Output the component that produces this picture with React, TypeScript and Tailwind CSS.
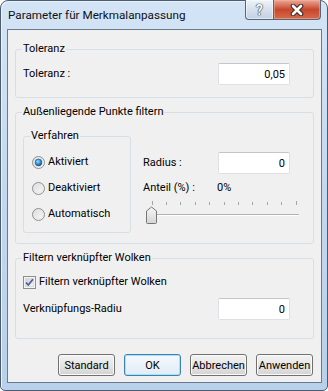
import React from 'react';

function Group({ label, className = '', children }: { label: string; className?: string; children: React.ReactNode }) {
  return (
    <fieldset className={`border border-[#d5dfe5] rounded-[3px] ${className}`}>
      <legend className="ml-[6px] px-[1px] leading-[16px]">{label}</legend>
      {children}
    </fieldset>
  );
}

function Field({ value, className = '' }: { value: string; className?: string }) {
  return (
    <div
      className={`w-[72px] h-[22px] bg-white border border-[#dde1e6] border-t-[#c3c7cc] rounded-[2px] flex items-center justify-end pr-[4px] leading-none ${className}`}
    >
      {value}
    </div>
  );
}

function Radio({ label, checked = false }: { label: string; checked?: boolean }) {
  return (
    <div className="flex items-center h-[16px]">
      <svg width="13" height="13" viewBox="0 0 13 13">
        <defs>
          <linearGradient id="rf" x1="0" y1="0" x2="1" y2="1">
            <stop offset="0" stopColor="#d9d9d9" />
            <stop offset="1" stopColor="#fbfbfb" />
          </linearGradient>
          <radialGradient id="rd" cx="0.4" cy="0.35" r="0.7">
            <stop offset="0" stopColor="#9adcff" />
            <stop offset="0.55" stopColor="#2b8fd6" />
            <stop offset="1" stopColor="#1a4f8c" />
          </radialGradient>
        </defs>
        <circle cx="6.5" cy="6.5" r="6" fill="url(#rf)" stroke="#8c8f93" strokeWidth="1" />
        <circle cx="6.5" cy="6.5" r="4.5" fill="none" stroke="#e8e8e8" strokeWidth="1" />
        {checked && <circle cx="6.5" cy="6.5" r="3.4" fill="url(#rd)" stroke="#1d4f86" strokeWidth="0.6" />}
      </svg>
      <span className="ml-[3px] leading-[16px]">{label}</span>
    </div>
  );
}

function Button({ label, primary = false }: { label: string; primary?: boolean }) {
  return (
    <div
      className={`w-[57px] h-[22px] rounded-[3px] border flex items-center justify-center leading-none ${
        primary
          ? 'border-[#3c7fb1] bg-gradient-to-b from-[#f4f9fc] to-[#e0ecf6] shadow-[inset_0_0_0_1px_#a9e3f7]'
          : 'border-[#707070] bg-gradient-to-b from-[#f2f2f2] via-[#e6e6e6] to-[#d3d3d3] shadow-[inset_0_0_0_1px_#fbfbfb]'
      }`}
    >
      {label}
    </div>
  );
}

function Slider() {
  const ticks = Array.from({ length: 11 }, (_, i) => 8.5 + i * 14.4);
  return (
    <svg width="157" height="26" viewBox="0 0 157 26" className="block">
      <defs>
        <linearGradient id="th" x1="0" y1="0" x2="0" y2="1">
          <stop offset="0" stopColor="#f7f7f7" />
          <stop offset="1" stopColor="#d5d5d5" />
        </linearGradient>
      </defs>
      {ticks.map((x, i) => (
        <line
          key={i}
          x1={Math.round(x) + 0.5}
          x2={Math.round(x) + 0.5}
          y1={i === 0 || i === ticks.length - 1 ? 1 : 2}
          y2={5}
          stroke="#a6a6a6"
          strokeWidth="1"
        />
      ))}
      <line x1="9" x2="156" y1="14.5" y2="14.5" stroke="#b4b4b4" strokeWidth="1" />
      <line x1="9" x2="156" y1="15.5" y2="15.5" stroke="#ffffff" strokeWidth="1" />
      <path
        d="M3.5 11 L8.5 7 L13.5 11 L13.5 22.5 Q13.5 23.5 12.5 23.5 L4.5 23.5 Q3.5 23.5 3.5 22.5 Z"
        fill="url(#th)"
        stroke="#767676"
        strokeWidth="1"
      />
    </svg>
  );
}

export default function App() {
  return (
    <div className="w-[328px] h-[391px] flex flex-col rounded-t-[8px] rounded-b-[5px] border border-[#4d5d70] bg-gradient-to-b from-[#d3e4f6] via-[#c3d8ee] to-[#b9d0ea] shadow-[inset_1px_1px_0_#e9f2fb] font-['Roboto',sans-serif] text-[11px] text-black">
      {/* Title bar */}
      <div className="h-[28px] flex items-start justify-between pl-[7px] pr-[6px]">
        <span className="mt-[6px] leading-[16px] text-[11.7px] text-[#101010]">Parameter für Merkmalanpassung</span>
        <div className="flex -mt-[1px]">
          <div className="w-[29px] h-[20px] rounded-bl-[4px] border border-t-0 border-[#56667a] bg-gradient-to-b from-[#eef3f9] via-[#d6e1ed] to-[#c2d1e2] shadow-[inset_0_0_0_1px_#ffffff80] flex items-center justify-center">
            <span className="text-[14px] font-bold leading-none text-[#f4f6f9] [text-shadow:0_0_1px_#2e3b4b,0_0_1px_#2e3b4b,0_0_1px_#2e3b4b]">
              ?
            </span>
          </div>
          <div className="w-[47px] h-[20px] rounded-br-[4px] border border-t-0 border-l-0 border-[#56667a] bg-gradient-to-b from-[#e9a796] via-[#c7462c] to-[#d86a49] shadow-[inset_0_0_0_1px_#f1b9a880] flex items-center justify-center">
            <svg width="16" height="12" viewBox="0 0 16 12">
              <path d="M4 2 L12 10 M12 2 L4 10" stroke="#3b2a28" strokeWidth="4.6" strokeLinecap="round" />
              <path d="M4 2 L12 10 M12 2 L4 10" stroke="#ffffff" strokeWidth="2.6" strokeLinecap="round" />
            </svg>
          </div>
        </div>
      </div>

      {/* Client area */}
      <div className="flex-1 ml-[6px] mr-[5px] mb-[7px] border border-[#6b7a8c] bg-[#f0f0f0] px-[7px] pt-[11px] flex flex-col">
        <Group label="Toleranz">
          <div className="flex items-center pl-[7px] pr-[23px] pt-[6px] pb-[12px]">
            <span className="leading-[16px]">Toleranz :</span>
            <Field value="0,05" className="ml-auto" />
          </div>
        </Group>

        <Group label="Außenliegende Punkte filtern" className="mt-[6px]">
          <div className="flex items-start pl-[7px] pt-[8px] pb-[10px]">
            <Group label="Verfahren" className="w-[108px]">
              <div className="flex flex-col gap-[10px] pl-[8px] pt-[10px] pb-[10px]">
                <Radio label="Aktiviert" checked />
                <Radio label="Deaktiviert" />
                <Radio label="Automatisch" />
              </div>
            </Group>
            <div className="flex-1 ml-[12px] pr-[13px] pt-[24px] flex flex-col">
              <div className="flex items-center">
                <span className="leading-[16px]">Radius :</span>
                <Field value="0" className="ml-auto mr-[10px]" />
              </div>
              <div className="flex items-center mt-[6px] h-[16px]">
                <span className="w-[74px] leading-[16px]">Anteil (%) :</span>
                <span className="leading-[16px]">0%</span>
              </div>
              <div className="mt-[4px]">
                <Slider />
              </div>
            </div>
          </div>
        </Group>

        <Group label="Filtern verknüpfter Wolken" className="mt-[6px]">
          <div className="flex flex-col pl-[7px] pr-[23px] pt-[8px] pb-[18px]">
            <div className="flex items-center h-[16px]">
              <svg width="13" height="13" viewBox="0 0 13 13">
                <defs>
                  <linearGradient id="cb" x1="0" y1="0" x2="1" y2="1">
                    <stop offset="0" stopColor="#cbcfd5" />
                    <stop offset="1" stopColor="#f6f6f6" />
                  </linearGradient>
                </defs>
                <rect x="0.5" y="0.5" width="12" height="12" fill="#f4f4f4" stroke="#8e8f8f" />
                <rect x="2.5" y="2.5" width="8" height="8" fill="url(#cb)" stroke="#d7dadf" />
                <path d="M3 6.5 L5.3 9 L10 3.3" fill="none" stroke="#4a5f97" strokeWidth="1.8" />
              </svg>
              <span className="ml-[3px] leading-[16px]">Filtern verknüpfter Wolken</span>
            </div>
            <div className="flex items-center mt-[8px]">
              <span className="leading-[16px]">Verknüpfungs-Radiu</span>
              <Field value="0" className="ml-auto" />
            </div>
          </div>
        </Group>

        <div className="flex justify-end gap-[9px] mt-[15px] pr-[1px]">
          <Button label="Standard" />
          <Button label="OK" primary />
          <Button label="Abbrechen" />
          <Button label="Anwenden" />
        </div>
      </div>
    </div>
  );
}
